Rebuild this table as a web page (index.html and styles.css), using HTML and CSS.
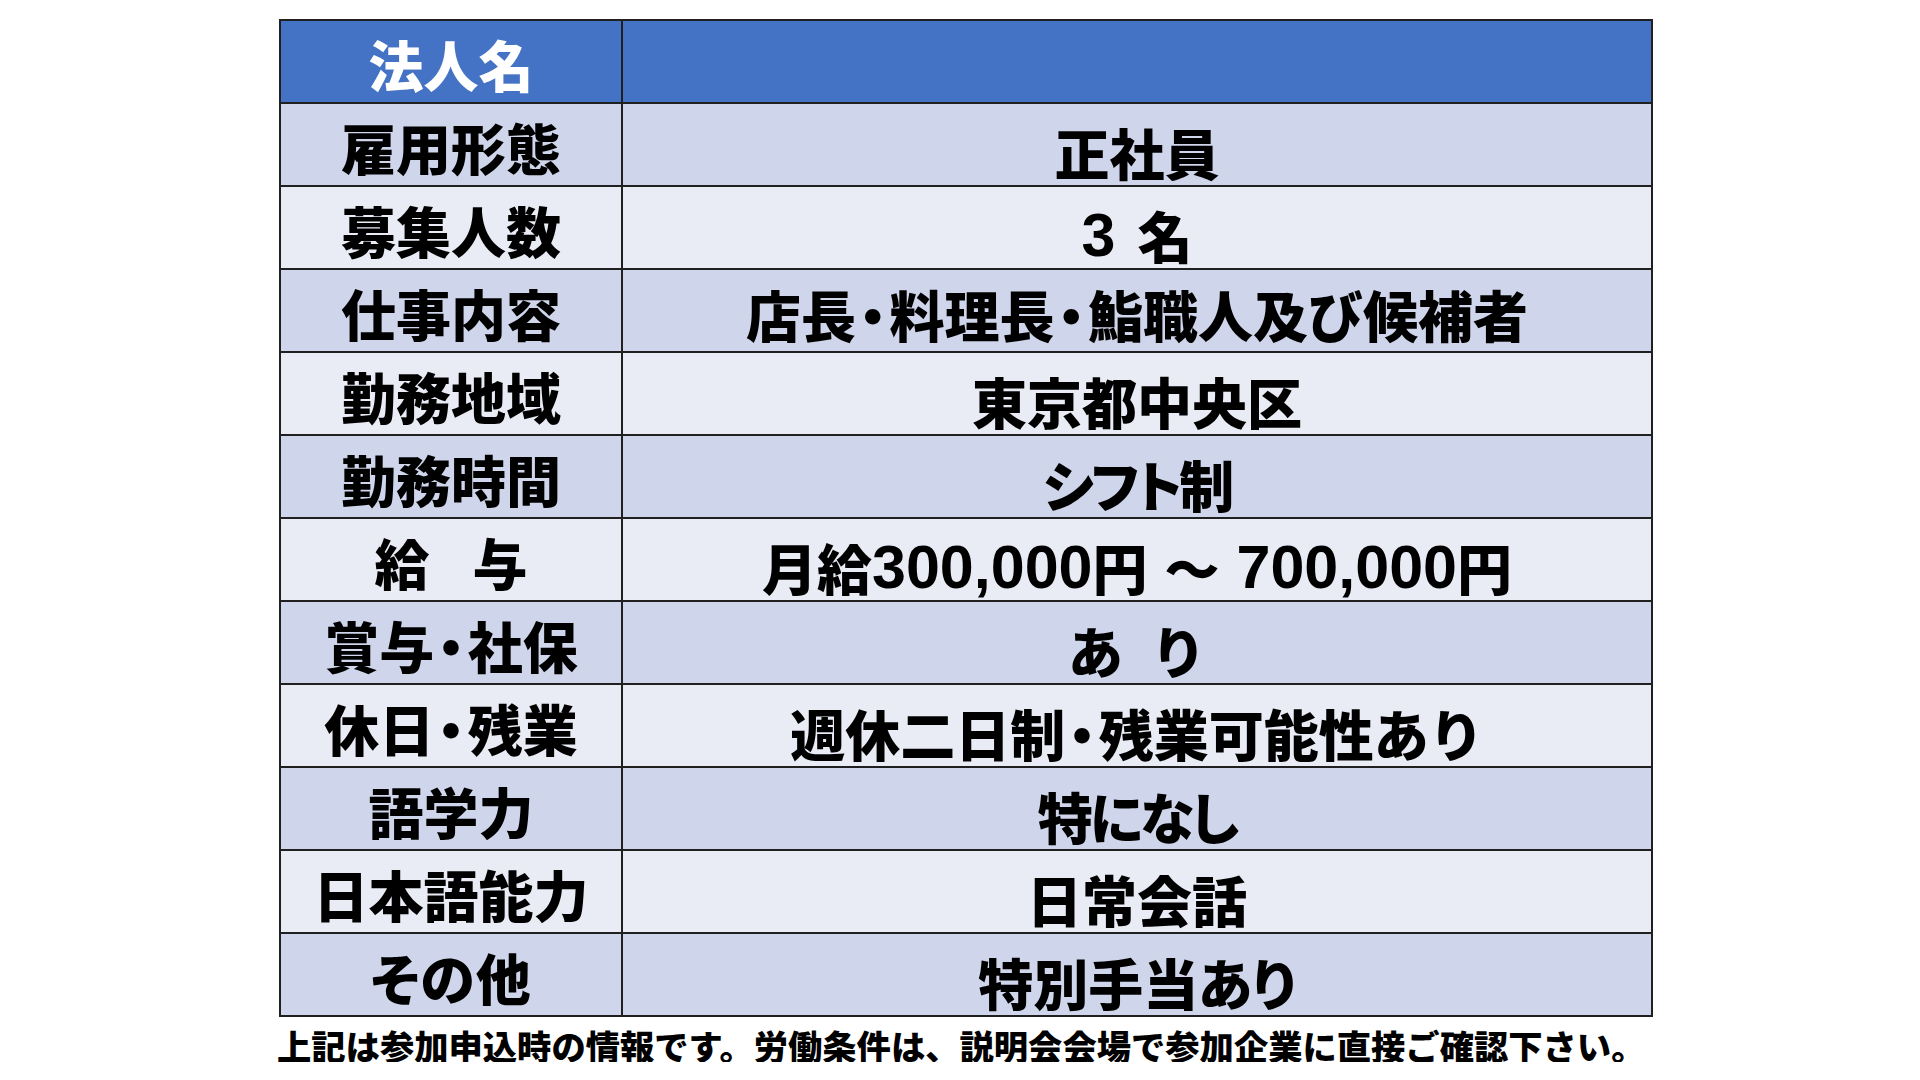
FILE: index.html
```html
<!DOCTYPE html>
<html lang="ja">
<head>
<meta charset="utf-8">
<title>募集要項</title>
<link rel="stylesheet" href="styles.css">
</head>
<body>
<div class="page">
  <div class="table">
    <div class="cell head label">法人名</div>
    <div class="cell head value"></div>

    <div class="cell odd label">雇用形態</div>
    <div class="cell odd value">正社員</div>

    <div class="cell even label">募集人数</div>
    <div class="cell even value"><span class="num">3</span><span class="sp-num"></span>名</div>

    <div class="cell odd label">仕事内容</div>
    <div class="cell odd value high">店長<span class="dot">・</span>料理長<span class="dot">・</span>鮨職人及び候補者</div>

    <div class="cell even label">勤務地域</div>
    <div class="cell even value">東京都中央区</div>

    <div class="cell odd label">勤務時間</div>
    <div class="cell odd value kana tight">シフト制</div>

    <div class="cell even label">給<span class="sp-label"></span>与</div>
    <div class="cell even value">月給<span class="num">300,000</span>円<span class="sp-tilde"></span>～<span class="sp-tilde"></span><span class="num">700,000</span>円</div>

    <div class="cell odd label">賞与<span class="dot">・</span>社保</div>
    <div class="cell odd value">あ<span class="sp-value"></span>り</div>

    <div class="cell even label">休日<span class="dot">・</span>残業</div>
    <div class="cell even value">週休二日制<span class="dot">・</span>残業可能性あり</div>

    <div class="cell odd label">語学力</div>
    <div class="cell odd value kana tight">特になし</div>

    <div class="cell even label">日本語能力</div>
    <div class="cell even value">日常会話</div>

    <div class="cell odd label kana loose">その他</div>
    <div class="cell odd value kana">特別手当あり</div>
  </div>
  <p class="note">上記は参加申込時の情報です。労働条件は、説明会会場で参加企業に直接ご確認下さい。</p>
</div>
</body>
</html>
```
FILE: styles.css
```css
html, body {
  margin: 0;
  padding: 0;
  background: #ffffff;
}

.page {
  padding: 19px 0 0 279px;
}

.table {
  display: grid;
  grid-template-columns: 340px 1028px;
  grid-auto-rows: 81px;
  gap: 2px;
  padding: 2px;
  background: #202020;
  width: max-content;
}

.cell {
  display: flex;
  align-items: center;
  justify-content: center;
  box-sizing: border-box;
  font-family: "Noto Sans CJK JP", sans-serif;
  font-weight: 900;
  font-size: 55px;
  line-height: 55px;
  color: #000000;
  white-space: nowrap;
}

.head {
  background: #4472c4;
  color: #ffffff;
}

.odd {
  background: #cfd5ea;
}

.even {
  background: #e9ebf5;
}

.label {
  padding-top: 4px;
}

.value {
  padding-top: 14px;
}

.value.high {
  padding-top: 5px;
}

.kana {
  font-feature-settings: "palt" 1;
  letter-spacing: 0;
}

.kana.tight {
  letter-spacing: -3px;
}

.kana.loose {
  letter-spacing: 1px;
}

.num {
  font-family: "Liberation Sans", sans-serif;
  font-weight: 700;
  font-size: 61px;
  line-height: 0;
}

.dot {
  font-feature-settings: "palt" 1;
  padding: 0 3px;
}

.sp-num {
  display: inline-block;
  width: 22px;
}

.sp-tilde {
  display: inline-block;
  width: 17px;
}

.sp-label {
  display: inline-block;
  width: 43px;
}

.sp-value {
  display: inline-block;
  width: 28px;
}

.note {
  margin: 11px 0 0 -2px;
  font-family: "Noto Sans CJK JP", sans-serif;
  font-weight: 900;
  font-size: 34.3px;
  line-height: 34px;
  color: #000000;
  white-space: nowrap;
}
```
